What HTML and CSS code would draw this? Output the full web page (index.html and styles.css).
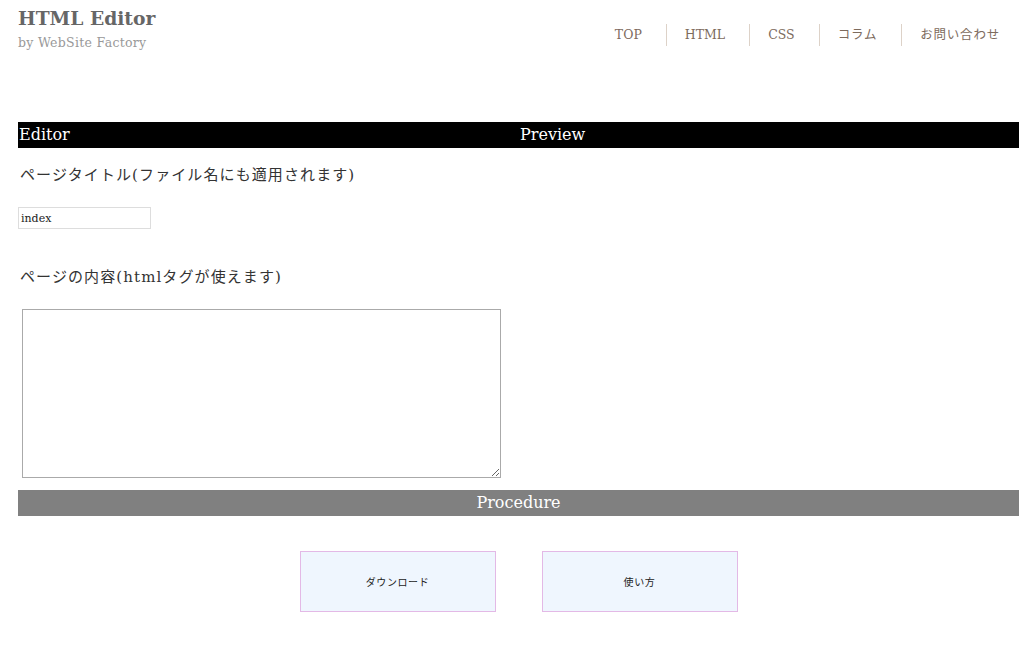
FILE: index.html
```html
<!DOCTYPE html>
<html lang="ja">
<head>
    <meta charset="UTF-8">
    <meta name="viewport" content="width=device-width, initial-scale=1.0">
    <title>HTML Editor</title>
    <link rel="stylesheet" href="styles.css">
</head>
<body>
    <header class="hd">
        <div class="logo">
            <h1 class="logo-title">HTML Editor</h1>
            <p class="logo-sub">by WebSite Factory</p>
        </div>
        <nav class="gn">
            <a href="#" class="gn-item">TOP</a>
            <a href="#" class="gn-item">HTML</a>
            <a href="#" class="gn-item">CSS</a>
            <a href="#" class="gn-item jp">コラム</a>
            <a href="#" class="gn-item jp">お問い合わせ</a>
        </nav>
    </header>

    <main class="mn">
        <div class="bar bk">
            <div class="bar-half">Editor</div>
            <div class="bar-half pv">Preview</div>
        </div>

        <div class="ed">
            <p class="lb">ページタイトル(ファイル名にも適用されます)</p>
            <input type="text" id="ti" class="ti" value="index">
            <p class="lb lb2">ページの内容(htmlタグが使えます)</p>
            <textarea id="tx" class="tx"></textarea>
        </div>

        <div class="bar gy">Procedure</div>

        <div class="bc">
            <button class="pb" id="dl">ダウンロード</button>
            <button class="pb" id="hw">使い方</button>
        </div>
    </main>
</body>
</html>
```

FILE: styles.css
```css
body {
    margin: 0;
    background-color: #fff;
    color: #333;
    font-family: "DejaVu Serif", "Noto Sans CJK JP", serif;
}
.hd {
    display: flex;
    justify-content: space-between;
    align-items: flex-start;
    padding: 6px 24px 0 18px;
    height: 122px;
    box-sizing: border-box;
}
.logo-title {
    margin: 0;
    font-size: 18.7px;
    line-height: 24px;
    color: #666;
    font-weight: bold;
}
.logo-sub {
    margin: 5px 0 0;
    font-size: 12.5px;
    line-height: 16px;
    color: #999;
    letter-spacing: 0.3px;
}
.gn {
    display: flex;
    align-items: center;
    margin-top: 18px;
}
.gn-item {
    font-size: 12.5px;
    line-height: 22px;
    color: #7d6b5d;
    text-decoration: none;
    padding: 0 24px 0 18px;
    border-left: 1px solid #ddd2c8;
}
.gn-item.jp {
    letter-spacing: 0.8px;
}
.gn-item:first-child {
    border-left: none;
}
.gn-item:last-child {
    padding-right: 0;
}
.mn {
    padding: 0 5px 0 18px;
}
.bar {
    height: 26px;
    line-height: 26px;
    color: #fff;
    font-size: 16px;
}
.bk {
    display: flex;
    background-color: #000;
}
.bar-half {
    width: 50%;
    padding-left: 1px;
}
.bar-half.pv {
    padding-left: 2px;
}
.gy {
    background-color: #808080;
    text-align: center;
}
.ed {
    padding-top: 16px;
}
.lb {
    margin: 0;
    font-size: 15px;
    line-height: 22px;
    padding-left: 2px;
    color: #333;
    letter-spacing: 1.1px;
}
.ti {
    display: block;
    margin-top: 21px;
    width: 133px;
    height: 22px;
    box-sizing: border-box;
    border: 1px solid #ddd;
    padding: 0 2px;
    font-family: "DejaVu Serif", serif;
    font-size: 11px;
    color: #222;
}
.lb2 {
    margin-top: 37px;
}
.tx {
    display: block;
    margin: 21px 0 0 4px;
    width: 479px;
    height: 169px;
    box-sizing: border-box;
    border: 1px solid #aaa;
    resize: both;
}
.gy {
    margin-top: 12px;
}
.bc {
    display: flex;
    justify-content: center;
    gap: 46px;
    margin-top: 35px;
}
.pb {
    width: 196px;
    height: 61px;
    background-color: #eff6fe;
    border: 1px solid #e3b9e6;
    font-family: "Noto Sans CJK JP", sans-serif;
    font-size: 10px;
    letter-spacing: 0.6px;
    color: #222;
    cursor: pointer;
}
```
